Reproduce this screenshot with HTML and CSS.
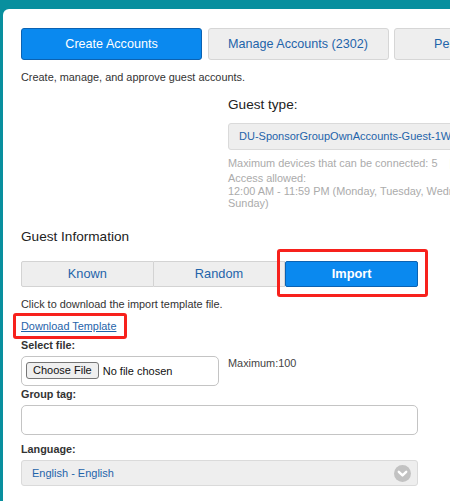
FILE: index.html
```html
<!DOCTYPE html>
<html lang="en">
  <head>
    <meta charset="utf-8">
    <title>Create Accounts</title>
    <link rel="stylesheet" href="styles.css">
  </head>
  <body>
    <div class="panel">
      <div class="tabs">
        <a href="#" class="tab active">Create Accounts</a>
        <a href="#" class="tab">Manage Accounts (2302)</a>
        <a href="#" class="tab">Pending Accounts</a>
      </div>
      <p class="desc">Create, manage, and approve guest accounts.</p>

      <div class="guest-type">
        <h5 class="field-title">Guest type:</h5>
        <div class="select wide">DU-SponsorGroupOwnAccounts-Guest-1Week</div>
        <div class="info">
          <div class="info-first">Maximum devices that can be connected: 5 <span class="sep">|</span></div>
          <div class="info-rest">
            <div>Access allowed:</div>
            <div class="nowrap">12:00 AM - 11:59 PM (Monday, Tuesday, Wednesday, Thursday, Friday, Saturday,</div>
            <div>Sunday)</div>
          </div>
        </div>
      </div>

      <h5 class="field-title section">Guest Information</h5>
      <div class="form">
        <div class="segments">
          <a href="#" class="seg">Known</a>
          <a href="#" class="seg">Random</a>
          <a href="#" class="seg active">Import<span class="mark mark-import"></span></a>
        </div>
        <p class="hint">Click to download the import template file.</p>
        <div class="dl-row"><a href="#" class="dl">Download Template<span class="mark mark-dl"></span></a></div>

        <label class="lbl">Select file:</label>
        <div class="file-row">
          <div class="file-box">
            <span class="file-btn">Choose File</span>
            <span class="file-name">No file chosen</span>
          </div>
          <span class="max">Maximum:100</span>
          <span class="edge"></span>
        </div>

        <label class="lbl tag">Group tag:</label>
        <input type="text" class="text-input">

        <label class="lbl lang">Language:</label>
        <div class="select lang-select">
          English - English
          <svg class="chev" width="17" height="17" viewBox="0 0 17 17">
            <circle cx="8.5" cy="8.5" r="8.5" fill="#c2c2c2"/>
            <path d="M4.8 6.8 L8.5 10.4 L12.2 6.8" fill="none" stroke="#fff" stroke-width="2.4" stroke-linecap="round" stroke-linejoin="round"/>
          </svg>
        </div>
      </div>
    </div>
  </body>
</html>
```
FILE: styles.css
```css
html, body{margin:0; padding:0; overflow:hidden;}
body{background-color:#088f9e; font-family:"Liberation Sans", Arial, sans-serif; color:#333;}
a{text-decoration:none;}

.panel{
	margin:9px 0 0 3px;
	width:900px;
	height:520px;
	background-color:#fff;
	border-radius:6px 0 0 0;
	padding:19px 18px 0 18px;
	box-sizing:border-box;
}

.tabs{display:flex; gap:5.5px;}
.tab{
	width:181px;
	height:32px;
	box-sizing:border-box;
	border:1px solid #d6d6d6;
	border-radius:3px;
	background-color:#eeeeee;
	color:#1f64aa;
	font-size:12.6px;
	line-height:30px;
	text-align:center;
	white-space:nowrap;
	overflow:hidden;
}
.tab.active{background-color:#0a89ef; border-color:#0b62b2; color:#fff;}

.desc{margin:10px 0 0; font-size:10.9px; line-height:14px; color:#333;}

.field-title{margin:13px 0 0; font-size:13.6px; line-height:16px; font-weight:normal; color:#222;}
.guest-type{margin-left:207px;}
.select{
	box-sizing:border-box;
	height:27px;
	background-color:#eeeeee;
	border:1px solid #dadada;
	border-radius:3px;
	color:#1f64aa;
	font-size:11px;
	line-height:25px;
	padding-left:10px;
	white-space:nowrap;
	position:relative;
}
.select.wide{margin-top:10px; width:500px;}

.info{margin-top:7px; color:#ababab; font-size:10.9px; white-space:nowrap;}
.info-first{line-height:13px;}
.info-first .sep{margin-left:9px; color:#888;}
.info-rest{margin-top:2px; line-height:12.5px;}

.section{margin-top:19px;}

.form{width:397px;}
.segments{display:flex; margin-top:16px;}
.seg{
	flex:1;
	height:26px;
	box-sizing:border-box;
	border:1px solid #d3d3d3;
	border-left-width:0;
	background-color:#eeeeee;
	color:#1f64aa;
	font-size:12.8px;
	line-height:24px;
	text-align:center;
	position:relative;
}
.seg:first-child{border-left-width:1px; border-radius:2px 0 0 2px;}
.seg.active{background-color:#0a89ef; border:1px solid #0b62b2; border-radius:2px; color:#fff; font-weight:bold;}

.mark{position:absolute; border:3px solid #f7211c; border-radius:3px;}
.mark-import{left:-9px; right:-11px; top:-13px; bottom:-11px;}
.mark-dl{left:-8px; right:-11px; top:-7px; bottom:-7px;}

.hint{margin:10px 0 0; font-size:10.9px; line-height:14px;}
.dl-row{margin-top:8px; font-size:10.9px; line-height:14px;}
.dl{color:#1f64aa; text-decoration:underline; position:relative;}

.lbl{display:block; font-size:10.8px; line-height:14px; font-weight:bold; color:#333; margin-top:5px;}
.lbl.tag{margin-top:1px;}
.lbl.lang{margin-top:7px;}

.file-row{display:flex; align-items:flex-start; margin-top:4px;}
.file-box{
	width:198px;
	height:30px;
	box-sizing:border-box;
	border:1px solid #c4c4c4;
	border-radius:5px;
	display:flex;
	align-items:center;
	padding-left:4px;
	font-size:11px;
	flex:none;
}
.file-btn{
	border:1px solid #767676;
	border-radius:3px;
	background-color:#efefef;
	color:#111;
	padding:0 6px;
	line-height:15px;
	font-size:11px;
}
.file-name{margin-left:4px; color:#111;}
.max{margin:0 0 0 9px; font-size:10.9px; line-height:14px; color:#444; flex:none;}
.edge{display:block; margin-left:158px; width:1px; height:22px; background-color:#cfcfcf; flex:none;}

.text-input{
	display:block;
	margin:4px 0 0;
	width:397px;
	height:30px;
	box-sizing:border-box;
	border:1px solid #c4c4c4;
	border-radius:5px;
	outline:none;
}
.lang-select{margin-top:4px; width:397px; height:26px; line-height:24px;}
.chev{position:absolute; right:6px; top:4px;}
```
